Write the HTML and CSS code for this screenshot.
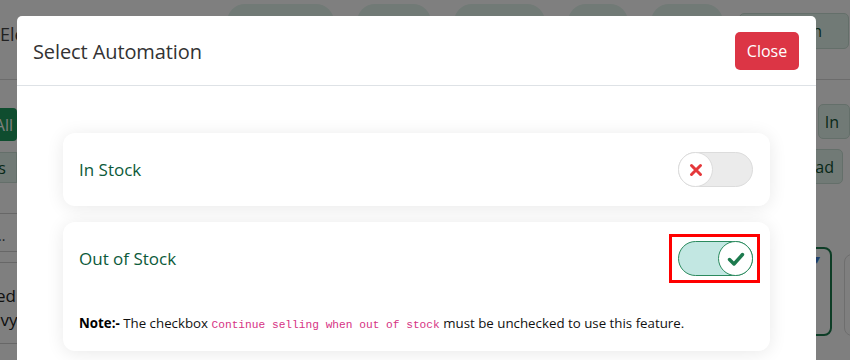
FILE: index.html
```html
<!DOCTYPE html>
<html lang="en">
<head>
    <meta charset="UTF-8">
    <meta name="viewport" content="width=device-width, initial-scale=1.0">
    <title>Select Automation</title>
    <link rel="stylesheet" href="styles.css">
</head>
<body>
    <!-- halaman di belakang modal -->
    <div class="page">
        <div class="toolbar">
            <h1 class="page-title">Electronics Store</h1>
            <div class="pills">
                <span class="pill p1">Bookmarks</span>
                <span class="pill p2">Orders</span>
                <span class="pill p3">Products</span>
                <span class="pill p4">Tags</span>
                <span class="pill p5">Billing</span>
            </div>
            <button class="btn-soft search-btn">Search</button>
        </div>

        <div class="content">
            <div class="left-col">
                <button class="btn-green">All</button>
                <button class="btn-soft tab-btn">Products</button>
                <div class="row-line"></div>
                <div class="row-line dots">Bluetooth...</div>
                <div class="row-line thin"></div>
                <div class="row-text">Wired<br>Heavy</div>
            </div>
            <div class="right-col">
                <div class="btn-group">
                    <button class="btn-green small">Sync</button>
                    <button class="btn-soft in-btn">In</button>
                </div>
                <button class="btn-soft load-btn">Upload</button>
                <div class="cards-bg">
                    <div class="bg-card active"><span class="caret">&#9662;</span></div>
                    <div class="bg-card"></div>
                </div>
            </div>
        </div>
    </div>

    <!-- modal -->
    <div class="backdrop">
        <div class="modal">
            <div class="modal-header">
                <h5 class="modal-title">Select Automation</h5>
                <button class="btn-close">Close</button>
            </div>
            <div class="modal-body">
                <div class="auto-card">
                    <div class="auto-row">
                        <span class="auto-name">In Stock</span>
                        <span class="switch" role="switch" aria-checked="false">
                            <span class="knob">
                                <svg width="14" height="14" viewBox="0 0 14 14">
                                    <path d="M2.5 2.5 L11.5 11.5 M11.5 2.5 L2.5 11.5" stroke="#e5383b" stroke-width="3" stroke-linecap="round" fill="none"/>
                                </svg>
                            </span>
                        </span>
                    </div>
                </div>

                <div class="auto-card">
                    <div class="auto-row">
                        <span class="auto-name">Out of Stock</span>
                        <span class="marker">
                            <span class="switch on" role="switch" aria-checked="true">
                                <span class="knob">
                                    <svg width="20" height="20" viewBox="0 0 20 20">
                                        <path d="M3.5 10.5 L8 15 L16.5 5.5" stroke="#1d7a4e" stroke-width="3.4" stroke-linecap="round" stroke-linejoin="round" fill="none"/>
                                    </svg>
                                </span>
                            </span>
                        </span>
                    </div>
                    <p class="note"><b>Note:-</b> The checkbox <code>Continue selling when out of stock</code> must be unchecked to use this feature.</p>
                </div>
            </div>
        </div>
    </div>
</body>
</html>
```

FILE: styles.css
```css
body {
    font-family: "Open Sans", "Noto Sans", Arial, sans-serif;
    background-color: #fff;
    margin: 0;
    padding: 0;
    height: 100vh;
    overflow: hidden;
    color: #212529;
}
button {
    font-family: inherit;
}

/* halaman belakang */
.toolbar {
    display: flex;
    align-items: flex-start;
    height: 80px;
    border-bottom: 1px solid #d8d8d8;
    box-sizing: border-box;
}
.page-title {
    margin: 22px 0 0 0;
    font-size: 18px;
    font-weight: 400;
    color: #444;
    width: 227px;
    white-space: nowrap;
}
.pills {
    display: flex;
    gap: 23px;
    margin-top: 4px;
}
.pill {
    display: block;
    height: 36px;
    border-radius: 18px;
    background-color: #e2f4ec;
    color: #0f5132;
    font-size: 14px;
    text-align: center;
    padding-top: 10px;
    box-sizing: border-box;
}
.p1 { width: 107px; }
.p2 { width: 74px; }
.p3 { width: 91px; }
.p4 { width: 60px; }
.p5 { width: 72px; }
.btn-soft {
    background-color: #e2f4ec;
    border: 1px solid #c9ded4;
    border-radius: 5px;
    color: #0f5132;
    font-size: 16px;
}
.search-btn {
    margin: 13px 0 0 16px;
    width: 110px;
    height: 36px;
    text-align: right;
    padding-right: 26px;
}
.content {
    display: flex;
    justify-content: space-between;
}
.left-col {
    width: 300px;
    display: flex;
    flex-direction: column;
    align-items: flex-start;
}
.btn-green {
    background-color: #1f9a5f;
    color: #fff;
    border: none;
    border-radius: 0 4px 4px 0;
    font-size: 16px;
    height: 33px;
    margin-top: 28px;
    padding: 0 4px 0 0;
    text-align: right;
    width: 17px;
    overflow: hidden;
    direction: rtl;
}
.tab-btn {
    width: 120px;
    height: 31px;
    margin-top: 11px;
    margin-left: -103px;
    text-align: right;
    padding-right: 10px;
    border-radius: 0;
}
.row-line {
    width: 300px;
    height: 30px;
    border-bottom: 1px solid #cfcfcf;
}
.row-line.dots {
    height: 37px;
    line-height: 44px;
    font-size: 14px;
    color: #444;
    text-indent: -70px;
}
.row-line.thin {
    height: 10px;
}
.row-text {
    margin-top: 21px;
    margin-left: -31px;
    font-size: 17px;
    line-height: 24px;
    color: #222;
    border-bottom: 1px solid #cfcfcf;
    width: 300px;
    padding-bottom: 11px;
}
.right-col {
    width: 60px;
    display: flex;
    flex-direction: column;
}
.btn-group {
    display: flex;
    gap: 12px;
    margin-top: 24px;
    margin-left: -20px;
}
.btn-green.small {
    margin: 0;
    width: 49px;
    height: 35px;
    border-radius: 5px;
}
.in-btn {
    width: 40px;
    height: 35px;
    text-align: left;
}
.load-btn {
    margin-top: 10px;
    margin-left: -40px;
    width: 93px;
    height: 35px;
    text-align: right;
    padding-right: 8px;
}
.cards-bg {
    display: flex;
    gap: 12px;
    margin-top: 63px;
    margin-left: -60px;
}
.bg-card {
    width: 76px;
    height: 80px;
    border: 1px solid #dcdcdc;
    border-radius: 8px;
    margin-top: 7px;
    flex-shrink: 0;
}
.bg-card.active {
    border: 2px solid #1a7a4c;
    margin-top: 0;
    width: 98px;
    height: 85px;
    position: relative;
}
.caret {
    position: absolute;
    top: 0;
    right: 10px;
    color: #3a7bd5;
    font-size: 14px;
}

/* modal */
.backdrop {
    position: fixed;
    top: 0;
    left: 0;
    right: 0;
    bottom: 0;
    background-color: rgba(0, 0, 0, 0.5);
}
.modal {
    background-color: #fff;
    border-radius: 5px;
    width: 799px;
    margin: 16px 0 0 17px;
    height: 420px;
}
.modal-header {
    display: flex;
    justify-content: space-between;
    align-items: center;
    padding: 16px 17px 15px 16px;
    border-bottom: 1px solid #dee2e6;
}
.modal-title {
    margin: 0;
    font-size: 20px;
    font-weight: 500;
    color: #333;
    letter-spacing: -0.1px;
}
.btn-close {
    background-color: #dc3545;
    color: #fff;
    border: none;
    border-radius: 5px;
    height: 38px;
    width: 64px;
    font-size: 16px;
    cursor: pointer;
}
.modal-body {
    padding: 47px 46px 46px;
    display: flex;
    flex-direction: column;
    gap: 16px;
}
.auto-card {
    background-color: #fff;
    border-radius: 12px;
    box-shadow: 0 2px 18px rgba(0, 0, 0, 0.09);
    padding: 19px 17px 19px 16px;
}
.auto-row {
    display: flex;
    justify-content: space-between;
    align-items: center;
}
.auto-name {
    font-size: 17px;
    font-weight: 500;
    color: #0c5a3a;
}
.switch {
    display: flex;
    align-items: center;
    width: 75px;
    height: 35px;
    border-radius: 18px;
    background-color: #ebebeb;
    border: 1px solid #dcdcdc;
    box-sizing: border-box;
}
.knob {
    display: flex;
    align-items: center;
    justify-content: center;
    width: 35px;
    height: 35px;
    margin-left: -1px;
    border-radius: 50%;
    background-color: #fff;
    border: 1px solid #dcdcdc;
    box-sizing: border-box;
}
.switch.on {
    background-color: #c2e7e2;
    border-color: #2a8a5e;
    justify-content: flex-end;
}
.switch.on .knob {
    border-color: #2a8a5e;
    margin-left: 0;
    margin-right: -1px;
}
/* kotak merah penanda */
.marker {
    display: flex;
    border: 3px solid #ff0000;
    padding: 4px 4px 4px 6px;
    margin: -7px -7px -7px -9px;
}
.note {
    margin: 38px 0 0 0;
    font-size: 13.3px;
    color: #111;
}
.note b {
    color: #000;
}
.note code {
    font-family: "Liberation Mono", "DejaVu Sans Mono", monospace;
    font-size: 11.2px;
    color: #d63384;
}
```
